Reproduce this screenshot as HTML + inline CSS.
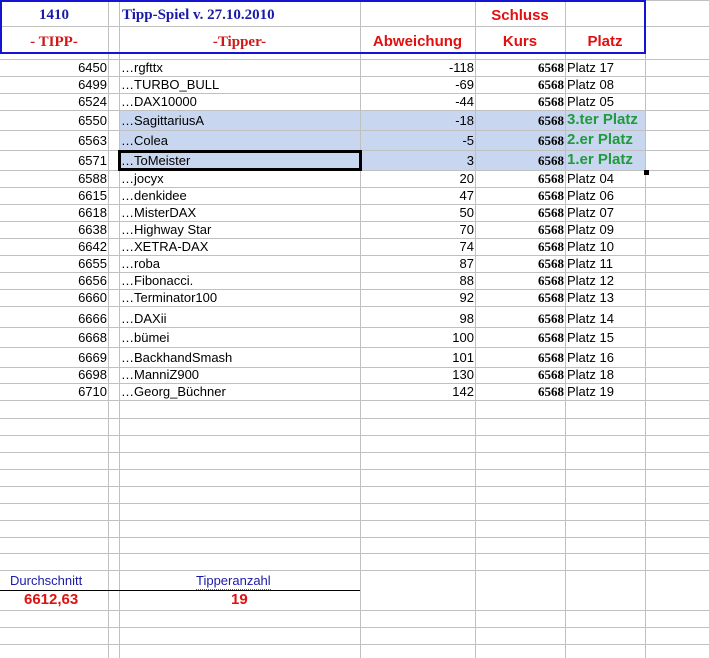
<!DOCTYPE html>
<html><head><meta charset="utf-8">
<style>
*{margin:0;padding:0;box-sizing:border-box}
body{width:709px;height:658px;background:#fff;position:relative;overflow:hidden;font-family:"Liberation Sans",Arial,sans-serif;}
.v{position:absolute;top:0;height:658px;width:1px;background:#c0c0c0}
.h{position:absolute;left:0;width:709px;height:1px;background:#c0c0c0}
.t{position:absolute;font-size:13px;line-height:16px;white-space:nowrap;color:#000}
.r{text-align:right}
.b{font-family:"Liberation Serif",serif;font-weight:bold}
.g{color:#1f9a3c;font-weight:bold;font-size:15px}
</style></head><body>
<!-- selection fill -->
<div style="position:absolute;left:119px;top:110px;width:527px;height:61px;background:#c9d6ef;border:1px solid #5a7cc4"></div>

<div class="v" style="left:108px"></div>
<div class="v" style="left:119px"></div>
<div class="v" style="left:360px"></div>
<div class="v" style="left:475px"></div>
<div class="v" style="left:565px"></div>
<div class="v" style="left:645px"></div>

<div class="h" style="top:0px"></div>
<div class="h" style="top:26px"></div>
<div class="h" style="top:59px"></div>
<div class="h" style="top:76px"></div>
<div class="h" style="top:93px"></div>
<div class="h" style="top:110px"></div>
<div class="h" style="top:130px"></div>
<div class="h" style="top:150px"></div>
<div class="h" style="top:170px"></div>
<div class="h" style="top:187px"></div>
<div class="h" style="top:204px"></div>
<div class="h" style="top:221px"></div>
<div class="h" style="top:238px"></div>
<div class="h" style="top:255px"></div>
<div class="h" style="top:272px"></div>
<div class="h" style="top:289px"></div>
<div class="h" style="top:306px"></div>
<div class="h" style="top:327px"></div>
<div class="h" style="top:347px"></div>
<div class="h" style="top:367px"></div>
<div class="h" style="top:383px"></div>
<div class="h" style="top:400px"></div>
<div class="h" style="top:418px"></div>
<div class="h" style="top:435px"></div>
<div class="h" style="top:452px"></div>
<div class="h" style="top:469px"></div>
<div class="h" style="top:486px"></div>
<div class="h" style="top:503px"></div>
<div class="h" style="top:520px"></div>
<div class="h" style="top:537px"></div>
<div class="h" style="top:553px"></div>
<div class="h" style="top:570px"></div>
<div class="h" style="top:610px"></div>
<div class="h" style="top:627px"></div>
<div class="h" style="top:644px"></div>

<!-- header box -->
<div style="position:absolute;left:0;top:0;width:646px;height:54px;border:2px solid #1414d2;border-top-width:2px"></div>
<div class="t b" style="left:0;width:108px;text-align:center;top:7px;font-size:15px;color:#1a1aa8">1410</div>
<div class="t b" style="left:122px;top:7px;font-size:15px;color:#1a1aa8">Tipp-Spiel v. 27.10.2010</div>
<div class="t b" style="left:0;width:108px;text-align:center;top:34px;font-size:15px;color:#d01818">- TIPP-</div>
<div class="t b" style="left:119px;width:241px;text-align:center;top:34px;font-size:15px;color:#d01818">-Tipper-</div>
<div class="t" style="left:360px;width:115px;text-align:center;top:34px;font-size:15px;font-weight:bold;color:#e01010">Abweichung</div>
<div class="t" style="left:475px;width:90px;text-align:center;top:8px;font-size:15px;font-weight:bold;color:#e01010">Schluss</div>
<div class="t" style="left:475px;width:90px;text-align:center;top:34px;font-size:15px;font-weight:bold;color:#e01010">Kurs</div>
<div class="t" style="left:565px;width:80px;text-align:center;top:34px;font-size:15px;font-weight:bold;color:#e01010">Platz</div>

<!-- rows: top = center-8 -->
<div class="t r" style="left:0;width:107px;top:60px">6450</div><div class="t" style="left:121px;top:60px">…rgfttx</div><div class="t r" style="left:360px;width:114px;top:60px">-118</div><div class="t r b" style="left:475px;width:89px;top:60px">6568</div><div class="t" style="left:567px;top:60px">Platz 17</div>
<div class="t r" style="left:0;width:107px;top:77px">6499</div><div class="t" style="left:121px;top:77px">…TURBO_BULL</div><div class="t r" style="left:360px;width:114px;top:77px">-69</div><div class="t r b" style="left:475px;width:89px;top:77px">6568</div><div class="t" style="left:567px;top:77px">Platz 08</div>
<div class="t r" style="left:0;width:107px;top:94px">6524</div><div class="t" style="left:121px;top:94px">…DAX10000</div><div class="t r" style="left:360px;width:114px;top:94px">-44</div><div class="t r b" style="left:475px;width:89px;top:94px">6568</div><div class="t" style="left:567px;top:94px">Platz 05</div>
<div class="t r" style="left:0;width:107px;top:113px">6550</div><div class="t" style="left:121px;top:113px">…SagittariusA</div><div class="t r" style="left:360px;width:114px;top:113px">-18</div><div class="t r b" style="left:475px;width:89px;top:113px">6568</div><div class="t g" style="left:567px;top:112px">3.ter Platz</div>
<div class="t r" style="left:0;width:107px;top:133px">6563</div><div class="t" style="left:121px;top:133px">…Colea</div><div class="t r" style="left:360px;width:114px;top:133px">-5</div><div class="t r b" style="left:475px;width:89px;top:133px">6568</div><div class="t g" style="left:567px;top:132px">2.er Platz</div>
<div class="t r" style="left:0;width:107px;top:153px">6571</div><div class="t" style="left:121px;top:153px">…ToMeister</div><div class="t r" style="left:360px;width:114px;top:153px">3</div><div class="t r b" style="left:475px;width:89px;top:153px">6568</div><div class="t g" style="left:567px;top:152px">1.er Platz</div>
<div class="t r" style="left:0;width:107px;top:171px">6588</div><div class="t" style="left:121px;top:171px">…jocyx</div><div class="t r" style="left:360px;width:114px;top:171px">20</div><div class="t r b" style="left:475px;width:89px;top:171px">6568</div><div class="t" style="left:567px;top:171px">Platz 04</div>
<div class="t r" style="left:0;width:107px;top:188px">6615</div><div class="t" style="left:121px;top:188px">…denkidee</div><div class="t r" style="left:360px;width:114px;top:188px">47</div><div class="t r b" style="left:475px;width:89px;top:188px">6568</div><div class="t" style="left:567px;top:188px">Platz 06</div>
<div class="t r" style="left:0;width:107px;top:205px">6618</div><div class="t" style="left:121px;top:205px">…MisterDAX</div><div class="t r" style="left:360px;width:114px;top:205px">50</div><div class="t r b" style="left:475px;width:89px;top:205px">6568</div><div class="t" style="left:567px;top:205px">Platz 07</div>
<div class="t r" style="left:0;width:107px;top:222px">6638</div><div class="t" style="left:121px;top:222px">…Highway Star</div><div class="t r" style="left:360px;width:114px;top:222px">70</div><div class="t r b" style="left:475px;width:89px;top:222px">6568</div><div class="t" style="left:567px;top:222px">Platz 09</div>
<div class="t r" style="left:0;width:107px;top:239px">6642</div><div class="t" style="left:121px;top:239px">…XETRA-DAX</div><div class="t r" style="left:360px;width:114px;top:239px">74</div><div class="t r b" style="left:475px;width:89px;top:239px">6568</div><div class="t" style="left:567px;top:239px">Platz 10</div>
<div class="t r" style="left:0;width:107px;top:256px">6655</div><div class="t" style="left:121px;top:256px">…roba</div><div class="t r" style="left:360px;width:114px;top:256px">87</div><div class="t r b" style="left:475px;width:89px;top:256px">6568</div><div class="t" style="left:567px;top:256px">Platz 11</div>
<div class="t r" style="left:0;width:107px;top:273px">6656</div><div class="t" style="left:121px;top:273px">…Fibonacci.</div><div class="t r" style="left:360px;width:114px;top:273px">88</div><div class="t r b" style="left:475px;width:89px;top:273px">6568</div><div class="t" style="left:567px;top:273px">Platz 12</div>
<div class="t r" style="left:0;width:107px;top:290px">6660</div><div class="t" style="left:121px;top:290px">…Terminator100</div><div class="t r" style="left:360px;width:114px;top:290px">92</div><div class="t r b" style="left:475px;width:89px;top:290px">6568</div><div class="t" style="left:567px;top:290px">Platz 13</div>
<div class="t r" style="left:0;width:107px;top:311px">6666</div><div class="t" style="left:121px;top:311px">…DAXii</div><div class="t r" style="left:360px;width:114px;top:311px">98</div><div class="t r b" style="left:475px;width:89px;top:311px">6568</div><div class="t" style="left:567px;top:311px">Platz 14</div>
<div class="t r" style="left:0;width:107px;top:330px">6668</div><div class="t" style="left:121px;top:330px">…bümei</div><div class="t r" style="left:360px;width:114px;top:330px">100</div><div class="t r b" style="left:475px;width:89px;top:330px">6568</div><div class="t" style="left:567px;top:330px">Platz 15</div>
<div class="t r" style="left:0;width:107px;top:350px">6669</div><div class="t" style="left:121px;top:350px">…BackhandSmash</div><div class="t r" style="left:360px;width:114px;top:350px">101</div><div class="t r b" style="left:475px;width:89px;top:350px">6568</div><div class="t" style="left:567px;top:350px">Platz 16</div>
<div class="t r" style="left:0;width:107px;top:367px">6698</div><div class="t" style="left:121px;top:367px">…ManniZ900</div><div class="t r" style="left:360px;width:114px;top:367px">130</div><div class="t r b" style="left:475px;width:89px;top:367px">6568</div><div class="t" style="left:567px;top:367px">Platz 18</div>
<div class="t r" style="left:0;width:107px;top:384px">6710</div><div class="t" style="left:121px;top:384px">…Georg_Büchner</div><div class="t r" style="left:360px;width:114px;top:384px">142</div><div class="t r b" style="left:475px;width:89px;top:384px">6568</div><div class="t" style="left:567px;top:384px">Platz 19</div>

<!-- active cell -->
<div style="position:absolute;left:118px;top:150px;width:244px;height:21px;border:3px solid #000"></div>
<div style="position:absolute;left:644px;top:170px;width:5px;height:5px;background:#000"></div>

<!-- footer -->
<div style="position:absolute;left:0;top:590px;width:360px;height:1px;background:#000"></div>
<div class="t" style="left:10px;top:573px;color:#1a1aa8">Durchschnitt</div>
<div class="t" style="left:196px;top:573px;color:#1a1aa8;border-bottom:1px dotted #c03030">Tipperanzahl</div>
<div class="t" style="left:24px;top:592px;color:#e01010;font-weight:bold;font-size:15px">6612,63</div>
<div class="t" style="left:231px;top:592px;color:#e01010;font-weight:bold;font-size:15px">19</div>
</body></html>
